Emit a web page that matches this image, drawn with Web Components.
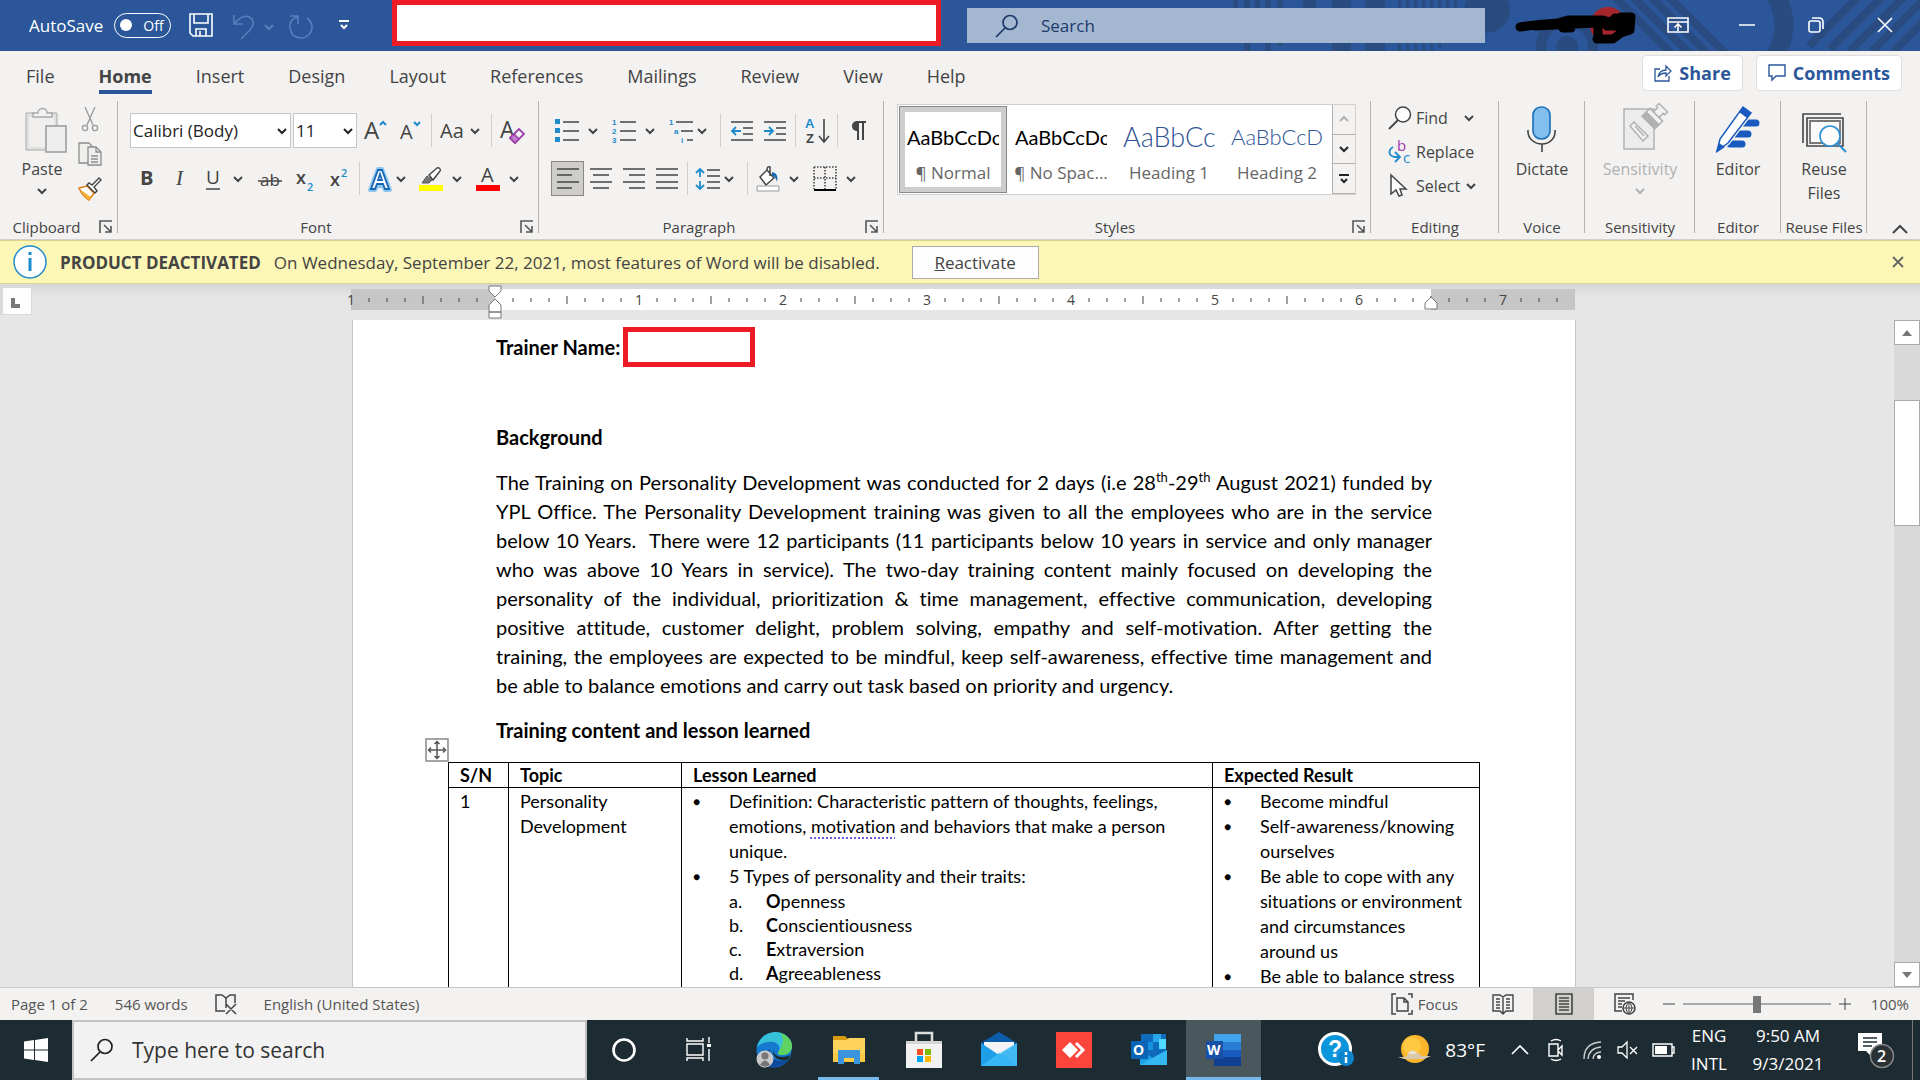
<!DOCTYPE html>
<html lang="en">
<head>
<meta charset="utf-8">
<title>Word</title>
<style>
  html, body { margin: 0; height: 100%; }
  body {
    overflow: hidden;
    font-family: "Open Sans", "Noto Sans", sans-serif;
    font-size: 16px;
    color: #444;
    --doc-font: Lato, "Liberation Sans", sans-serif;
  }
</style>
</head>
<body>
<word-window></word-window>

<script>
const CHEVRON = '<path d="M1 3l4 4 4-4" fill="none" stroke="currentColor" stroke-width="2"/>';

// name: [width, height, markup]
const ICONS = {
  chevron: [10, 10, CHEVRON],
  save: [24, 24, '<path d="M1 1h22v22H4l-3-3zM5 1v9h14V1M7 23v-7h10v7M11 18v5" fill="none" stroke="#fff" stroke-width="1.600"/>'],
  undo: [24, 26, '<path d="M2 1v9h9M2 10C8 3 13 1 17 3c6 3 5 9 1 13l-9 9" fill="none" stroke="#5480bd" stroke-width="1.600"/>'],
  redo: [26, 26, '<path d="M2 2h8v8M10 3C4 4 1 9 2 14c1 6 5 10 11 10s11-5 11-11c0-4-2-7-5-9" fill="none" stroke="#5480bd" stroke-width="1.600"/>'],
  more: [12, 12, '<path d="M1 2h10M3 6l3 3 3-3" fill="none" stroke="currentColor" stroke-width="2"/>'],
  search: [24, 24, '<circle cx="15" cy="8.500" r="7" fill="none" stroke="currentColor" stroke-width="1.700"/><path d="M10 14l-9 9" stroke="currentColor" stroke-width="1.700"/>'],
  ribbonmode: [22, 16, '<path d="M1 1h20v14H1zM1 5h20M11 14V8M7.500 10.500L11 7l3.500 3.500" fill="none" stroke="#fff" stroke-width="1.600"/>'],
  minimise: [16, 16, '<path d="M0 8h16" stroke="#fff" stroke-width="1.500"/>'],
  restore: [16, 16, '<path d="M1 6q0-2 2-2h7q2 0 2 2v7q0 2-2 2H3q-2 0-2-2zM4 1h7q4 0 4 4v7" fill="none" stroke="#fff" stroke-width="1.600"/>'],
  close: [16, 16, '<path d="M1 1l14 14M15 1L1 15" stroke="currentColor" stroke-width="1.600"/>'],
  dismiss: [12, 12, '<path d="M1 1l10 10M11 1L1 11" stroke="currentColor" stroke-width="1.800"/>'],
  share: [18, 18, '<path d="M6 5H1v12h14v-5M4 13c1-5 4-7 8-7V2l5 5-5 5V9c-4 0-6 1-8 4z" fill="none" stroke="#2b579a" stroke-width="1.300"/>'],
  comment: [18, 18, '<path d="M1 1h16v11H8l-4 4v-4H1z" fill="none" stroke="#2b579a" stroke-width="1.400"/>'],
  paste: [50, 48, '<g transform="translate(8 0)"><path d="M1 8h9v4h14V8h8v37H1z" fill="#e3e1df" stroke="#aaa"/><path d="M4 12h25v30H4z" fill="#f0efee"/><path d="M8 12V8h5c0-6 9-6 9 0h5v4z" fill="#f3f2f1" stroke="#aaa" stroke-width="1.500"/><path d="M21 21h20v26H21z" fill="#eee" stroke="#999" stroke-width="1.500"/></g>'],
  cut: [24, 24, '<g fill="none" stroke="#999" stroke-width="1.300"><path d="M7 0l8 18M17 0L9 18"/><circle cx="7" cy="21" r="2.600"/><circle cx="17" cy="21" r="2.600"/></g>'],
  copy: [24, 24, '<g fill="#f0efee" stroke="#8d8d8d" stroke-width="1.300"><path d="M1 1h10l3 3v17H1z"/><path d="M10 5h8l5 5v13H10z"/><path d="M18 5v5h5M13 14h7M13 17h7M13 20h7" fill="none"/></g>'],
  painter: [24, 24, '<path d="M1 11l8-2 7 7-5 7C6 20 3 16 1 11z" fill="#fff" stroke="#e07b12" stroke-width="1.500"/><path d="M3 13l10 7-2 3C7 21 5 17 3 13z" fill="#f3b13c"/><path d="M9 8l8 8 2-2-3-4 7-7-2-2-7 7-3-2z" fill="#fff" stroke="#444" stroke-width="1.400"/>'],
  grow: [24, 24, '<text x="0" y="20" font-size="24" fill="#444">A</text><path d="M16 6l3-3 3 3" fill="none" stroke="#1e8bcd" stroke-width="2"/>'],
  shrink: [24, 24, '<text x="1" y="20" font-size="20" fill="#444">A</text><path d="M15 3l3 3 3-3" fill="none" stroke="#1e8bcd" stroke-width="2"/>'],
  case: [26, 24, '<text x="0" y="19" font-size="20" fill="#444">Aa</text>'],
  clear: [26, 26, '<text x="0" y="20" font-size="23" fill="#444">A</text><path d="M10 20l9-9 5 5-9 9z" fill="#f3f2f1" stroke="#9b3fa8" stroke-width="1.800"/><path d="M10 20l4-4 5 5-4 4z" fill="#c27bd0" stroke="#9b3fa8" stroke-width="1.500"/>'],
  bold: [24, 24, '<text x="5" y="18" font-size="20" font-weight="700" fill="#444">B</text>'],
  italic: [24, 24, '<text x="8" y="18" font-size="21" font-style="italic" font-family="Liberation Serif, serif" fill="#444">I</text>'],
  underline: [24, 24, '<text x="6" y="17" font-size="19" fill="#444">U</text><path d="M6 22h14" stroke="#444" stroke-width="1.500"/>'],
  strike: [24, 24, '<text x="2" y="19" font-size="17" fill="#444">ab</text><path d="M0 14h24" stroke="#444" stroke-width="1.500"/>'],
  sub: [24, 26, '<text x="4" y="18" font-size="18" font-weight="600" fill="#444">x</text><text x="15" y="25" font-size="11" font-weight="600" fill="#1e8bcd">2</text>'],
  sup: [24, 26, '<text x="3" y="20" font-size="18" font-weight="600" fill="#444">x</text><text x="14" y="11" font-size="11" font-weight="600" fill="#1e8bcd">2</text>'],
  effects: [24, 26, '<path d="M2 24L10 3h4l8 21h-5l-2-4H9l-2 4z" fill="#fff" stroke="#8fc6ee" stroke-width="4" stroke-linejoin="round"/><path d="M3 23L10 4h4l7 19h-4l-2-5H9l-2 5zM10 14h4l-2-6z" fill="#fff" stroke="#1667b7" stroke-width="1.800"/>'],
  highlight: [24, 26, '<path d="M0 19h24v6H0z" fill="#ff0"/><path d="M10 9l8-7q2-1 3 1 1 1 0 2l-7 9z" fill="#fff" stroke="#444" stroke-width="1.400"/><path d="M8 10l5 4-3 3H3z" fill="#777" stroke="#555"/>'],
  color: [24, 26, '<text x="5" y="16" font-size="20" fill="#444">A</text><path d="M0 19h24v6H0z" fill="#f00"/>'],
  bullets: [24, 26, '<path d="M8 4h16M8 13h16M8 22h16" stroke="#444" stroke-width="1.600"/><path d="M0 1h5v5H0zM0 10h5v5H0zM0 19h5v5H0z" fill="#1e8bcd"/>'],
  numbers: [24, 26, '<path d="M8 4h16M8 13h16M8 22h16" stroke="#444" stroke-width="1.600"/><g font-size="8" font-weight="700" font-family="Liberation Sans, sans-serif" fill="#1e8bcd"><text x="0" y="7">1</text><text x="0" y="16">2</text><text x="0" y="25">3</text></g>'],
  multi: [24, 26, '<path d="M7 4h17M12 13h12M18 22h6" stroke="#444" stroke-width="1.600"/><g font-size="8" font-weight="700" font-family="Liberation Sans, sans-serif" fill="#1e8bcd"><text x="0" y="7">1</text><text x="5" y="16">a</text><text x="12" y="25">i</text></g>'],
  outdent: [24, 24, '<path d="M1 3h22M13 9h10M13 15h10M1 21h22" stroke="#444" stroke-width="1.600"/><path d="M11 12H2M6 8l-4 4 4 4" fill="none" stroke="#1e8bcd" stroke-width="1.800"/>'],
  indent: [24, 24, '<path d="M1 3h22M13 9h10M13 15h10M1 21h22" stroke="#444" stroke-width="1.600"/><path d="M1 12h9M6 8l4 4-4 4" fill="none" stroke="#1e8bcd" stroke-width="1.800"/>'],
  sort: [24, 26, '<g font-size="13" font-weight="700" font-family="Liberation Sans, sans-serif"><text x="0" y="10" fill="#1e8bcd">A</text><text x="1" y="25" fill="#444">Z</text></g><path d="M19 1v22M14 18l5 6 5-6" fill="none" stroke="#444" stroke-width="1.600"/>'],
  pilcrow: [16, 22, '<path d="M15 2H6" stroke="#444" stroke-width="2"/><path d="M7 1C3 1 1 3 1 6s2 5 6 5z" fill="#444"/><path d="M7 1v19M12 1v19" stroke="#444" stroke-width="2"/>'],
  left: [22, 24, '<path d="M0 2h22M0 8h15M0 15h22M0 21h15" stroke="#444" stroke-width="1.700"/>'],
  center: [22, 24, '<path d="M0 2h22M3 8h16M0 15h22M3 21h16" stroke="#444" stroke-width="1.700"/>'],
  right: [22, 24, '<path d="M0 2h22M6 8h16M0 15h22M6 21h16" stroke="#444" stroke-width="1.700"/>'],
  justify: [22, 24, '<path d="M0 2h22M0 8h22M0 15h22M0 21h22" stroke="#444" stroke-width="1.700"/>'],
  spacing: [24, 24, '<path d="M11 3h13M11 9h13M11 15h13M11 21h13" stroke="#444" stroke-width="1.600"/><path d="M4 2v8M0 6l4-4 4 4M4 14v8M0 18l4 4 4-4" fill="none" stroke="#1e8bcd" stroke-width="1.800"/>'],
  shading: [24, 26, '<path d="M4 11l7-7 7 8-8 7zM11 4q0-4 3-3v9" fill="#fff" stroke="#444" stroke-width="1.500"/><path d="M16 6q7 1 5 10-1-5-5-7z" fill="#1667b7"/><path d="M1 20h22v5H1z" fill="#fff" stroke="#999"/>'],
  borders: [24, 26, '<path d="M1 1h22v22M1 1v22M12 1v22M1 12h22" fill="none" stroke="#444" stroke-width="1.600" stroke-dasharray="1.500 1.500"/><path d="M1 24h22" stroke="#000" stroke-width="2"/>'],
  launcher: [14, 14, '<path d="M1 13V1h12M5 5l7 7M12 6v6H6" fill="none" stroke="#555" stroke-width="1.600"/>'],
  find: [24, 24, '<circle cx="15" cy="8.500" r="7.500" fill="#fff" stroke="#444" stroke-width="1.500"/><path d="M10 14l-9 9" stroke="#444" stroke-width="1.800"/>'],
  replace: [24, 26, '<text x="9" y="12" font-size="15" fill="#a33bae">b</text><text x="15" y="24" font-size="15" fill="#1e8bcd">c</text><path d="M5 8c-5 3-5 9 2 10h4M7 13l5 5-5 5" fill="none" stroke="#1e8bcd" stroke-width="1.800"/>'],
  select: [24, 26, '<path d="M3 2v19l5-4 3 6 3-1-2-6h6z" fill="#fff" stroke="#444" stroke-width="1.500"/>'],
  dictate: [32, 48, '<rect x="7" y="2" width="17" height="32" rx="8" fill="#83beec" stroke="#1a6fb9" stroke-width="1.600"/><path d="M2 25v2c0 6 6 12 14 12s13-6 13-12v-2M16 39v8" fill="none" stroke="#444" stroke-width="1.600"/>'],
  sensitivity: [44, 48, '<g stroke="#b1b1b1" stroke-width="1.500"><path d="M6 4h30v40H6z" fill="#ececec"/><g transform="translate(34 14) rotate(45)"><path d="M-9-6H9V-1H-9zM-4-6v-6h-2v-4H6v4H4v6z" fill="#f3f2f1"/><path d="M-9 0H9V5H-9z" fill="#b1b1b1"/></g><path d="M12 21l4-4 14 14-5 5zM17 21l9 10" fill="#f3f2f1"/></g>'],
  editor: [48, 48, '<g stroke="#185abd" stroke-width="7" stroke-linecap="round"><path d="M24 18h18M20 29h14M16 39h12"/></g><path d="M29 2l8 6-23 30-10 9-2-2 3-11z" fill="#fff" stroke="#f3f2f1" stroke-width="4"/><path d="M29 2l8 6-23 30-11 8 3-12z" fill="#fff" stroke="#185abd" stroke-width="1.500"/><path d="M29 2l8 6-4 5-8-6zM5 38l6 4-9 6z" fill="#185abd"/>'],
  reuse: [48, 48, '<g fill="none"><path d="M3 38V9h38M7 41V13h36v28z" stroke="#444" stroke-width="1.600"/><path d="M10 16h30v22H10z" fill="#fafafa" stroke="#777" stroke-width="1.800"/><circle cx="30" cy="31" r="10" fill="#fff" stroke="#2b8fd4" stroke-width="1.600"/><path d="M37 38l9 9" stroke="#2b8fd4" stroke-width="2"/></g>'],
  info: [34, 34, '<circle cx="17" cy="17" r="16" fill="#fff" stroke="#1e8bcd" stroke-width="1.500"/><path d="M17 13v13M17 7v3" stroke="#1e8bcd" stroke-width="3"/>'],
  collapse: [16, 10, '<path d="M1 9l7-7 7 7" fill="none" stroke="#444" stroke-width="2"/>'],
  tri: [10, 6, '<path d="M0 6l5-6 5 6z" fill="#777"/>'],
  tab: [28, 26, '<path d="M8 10h4v6h5v4H8z" fill="#777"/>'],
  move: [24, 24, '<path d="M1 1h22v22H1z" fill="#fff" stroke="#888" stroke-width="1.500"/><path d="M12 4v16M4 12h16M9.500 6L12 3.500 14.500 6M9.500 18l2.500 2.500 2.500-2.500M6 9.500L3.500 12 6 14.500M18 9.500l2.500 2.500-2.500 2.500" fill="none" stroke="#555" stroke-width="1.500"/>'],
  proof: [22, 22, '<path d="M10 18H1V2h6l4 3 4-3h5v8M11 5v10M11 11l10 10M21 11L11 21" fill="none" stroke="#444" stroke-width="1.500"/>'],
  focus: [22, 22, '<path d="M5 1H1v20h4M17 1h4v4M21 17v4h-4" fill="none" stroke="#444" stroke-width="1.500"/><path d="M6 5h7l4 4v9H6zM13 5v4h4" fill="none" stroke="#444" stroke-width="1.500"/>'],
  read: [22, 22, '<path d="M1 2h7l3 2 3-2h7v16h-7l-3 3-3-3H1zM11 4v16M4 6h4M4 9h4M4 12h4M4 15h4M14 6h4M14 9h4M14 12h4M14 15h4" fill="none" stroke="#444" stroke-width="1.400"/>'],
  print: [18, 22, '<path d="M1 1h16v20H1zM4 5h10M4 8h10M4 11h10M4 14h10M4 17h10" fill="none" stroke="#444" stroke-width="1.600"/>'],
  web: [22, 22, '<path d="M8 18H1V1h18v6M4 5h12M4 8h7M4 11h4M4 14h4" fill="none" stroke="#444" stroke-width="1.500"/><circle cx="15" cy="15" r="6" fill="#f3f2f1" stroke="#444" stroke-width="1.500"/><path d="M9 15h12M15 9v12M15 9q-6 6 0 12q6-6 0-12" fill="none" stroke="#444"/>'],
  minus: [12, 12, '<path d="M0 6h12" stroke="#444"/>'],
  plus: [12, 12, '<path d="M0 6h12M6 0v12" stroke="#444"/>'],
  windows: [24, 24, '<path d="M0 3.500L10 2v9.500H0zM11 2l13-2v11.500H11zM0 12.500h10V22L0 20.500zM11 12.500h13V24l-13-2z" fill="#fff"/>'],
  cortana: [26, 26, '<circle cx="13" cy="13" r="10.500" fill="none" stroke="#fff" stroke-width="2.600"/>'],
  taskview: [26, 26, '<path d="M1 1v3h16V1M1 7h16v11H1zM1 24v-3h16v3M23 0v6M23 12v12" fill="none" stroke="#fff" stroke-width="1.400"/><path d="M21 7h4v3h-4z" fill="#fff"/>'],
  edge: [36, 36, '<circle cx="18" cy="18" r="17.500" fill="#1579cf"/><path d="M1 15C4 3 14 0 20 0c9 0 16 7 16 14 0 7-6 9-10 9-4 0-5-2-3-4 2-6-4-10-9-9C8 10 4 12 1 15z" fill="#35c1d6"/><path d="M24 1c8 2 12 8 12 13 0 7-6 9-10 9-4 0-5-2-3-4 4-6 6-12 1-18z" fill="#5fd35f"/><path d="M14 17c-1 10 8 14 18 11-6 8-16 9-21 5-5-5-3-12 3-16z" fill="#0c4a9b"/><path d="M18 16c-2 3 0 8 7 9 4 0 7-1 9-2l-2 5c-10 2-18-4-14-12z" fill="#1d2c33"/><circle cx="9" cy="27" r="8.500" fill="#c9c9c9"/><circle cx="9" cy="24" r="3.500" fill="#777"/><path d="M4 33q5-9 10 0-5 3-10 0z" fill="#777"/>'],
  explorer: [34, 30, '<path d="M1 1h12l3 3v4H1z" fill="#d99a10"/><path d="M1 5h13l3-2h16v24H1z" fill="#ffd35c"/><path d="M1 18h32v9H1z" fill="#fbc944"/><path d="M6 29V15h22v14h-6v-6H12v6z" fill="#3a94de"/>'],
  store: [36, 36, '<path d="M10 10V1h16v9" fill="none" stroke="#ddd" stroke-width="2.500"/><path d="M0 9h36v27H0z" fill="#f2f2f2"/><path d="M0 9h36v3H0z" fill="#d5d5d5"/><path d="M11 17h6v6h-6z" fill="#f25022"/><path d="M19 17h6v6h-6z" fill="#7fba00"/><path d="M11 24h6v6h-6z" fill="#00a4ef"/><path d="M19 24h6v6h-6z" fill="#ffb900"/>'],
  mail: [36, 36, '<path d="M0 11L18 0l18 11v5H0z" fill="#0b5cab"/><path d="M3 10h30v12H3z" fill="#f4f4f4"/><path d="M0 11l18 12L36 11v23H0z" fill="#1e9de8"/><path d="M0 34l18-13 18 13z" fill="#36b7f5"/><path d="M36 11v23L18 21z" fill="#58cbf8" opacity=".6"/>'],
  anydesk: [36, 36, '<path d="M0 0h36v36H0z" fill="#fb443b"/><path d="M6 18l8-8 8 8-8 8z" fill="#fff"/><path d="M20 11l7 7-7 7" fill="none" stroke="#fff" stroke-width="3"/>'],
  outlook: [36, 34, '<path d="M10 1h25v31H10z" fill="#0f6cbd"/><path d="M10 9h12v8H10z" fill="#1490df"/><path d="M22 1h8v8h-8z" fill="#28a8ea"/><path d="M28 6h7v10h-7z" fill="#50d9ff"/><path d="M9 17l13 8 14-8v15H9z" fill="#1aa0e8"/><path d="M9 32l27-15v15z" fill="#35b8f1"/><path d="M0 8h17v18H0z" fill="#0a64b5"/><text x="2" y="22" font-size="14" font-weight="700" fill="#fff">O</text>'],
  word: [36, 34, '<path d="M8 1h27v8H8z" fill="#41a5ee"/><path d="M8 9h27v8H8z" fill="#2b7cd3"/><path d="M8 17h27v7H8z" fill="#185abd"/><path d="M8 24h27v9H8z" fill="#103f91"/><path d="M0 8h17v18H0z" fill="#1850a8"/><text x="1" y="22" font-size="14" font-weight="700" fill="#fff">W</text>'],
  help: [36, 36, '<circle cx="17" cy="17" r="15.500" fill="#0b96dc" stroke="#fff" stroke-width="3"/><text x="10" y="25" font-size="23" font-weight="700" font-family="Liberation Sans, sans-serif" fill="#fff">?</text><circle cx="28" cy="26" r="8" fill="#0b84cc"/><path d="M28 25v6M28 20v3" stroke="#fff" stroke-width="2.500"/>'],
  weather: [36, 32, '<circle cx="18" cy="15" r="14" fill="#fcb62b"/><circle cx="15" cy="12" r="9" fill="#ffd04f" opacity=".7"/><path d="M1 23h8c2-4 5-4 7-2 3-4 7-2 8 1h10l-7 3H7z" fill="#d9c9ae"/><path d="M11 20c2-5 8-4 9 0z" fill="#e8e2d6"/>'],
  up: [18, 12, '<path d="M1 10l8-8 8 8" fill="none" stroke="#fff" stroke-width="1.600"/>'],
  meet: [18, 24, '<path d="M2 6h9v12H2zM11 12l4-4v9l-4-4M4 3q5-3 10 0M4 21q5 3 10 0" fill="none" stroke="#fff" stroke-width="1.400"/>'],
  wifi: [20, 20, '<path d="M2 19Q2 3 19 2M6 19Q7 8 19 7M11 19q1-7 8-7" fill="none" stroke="#ccc" stroke-width="1.400"/><circle cx="17" cy="17" r="2" fill="#fff"/>'],
  mute: [22, 18, '<path d="M1 6h4l5-5v16l-5-5H1zM13 6l7 7M20 6l-7 7" fill="none" stroke="#fff" stroke-width="1.300"/>'],
  battery: [24, 14, '<path d="M1 1h19v12H1zM20 4h2v6h-2" fill="none" stroke="#fff" stroke-width="1.400"/><path d="M3 3h12v8H3z" fill="#fff"/>'],
  notify: [38, 38, '<path d="M1 2h24v18H14v5l-5-5H1z" fill="#fff"/><path d="M6 7h14M6 11h14M6 15h9" stroke="#1d2c33" stroke-width="1.400"/><circle cx="25" cy="25" r="11.500" fill="#2b3236" stroke="#888" stroke-width="1.500"/><text x="20" y="31" font-size="16" font-weight="600" fill="#fff">2</text>']
};

const icon = (name) => {
  const [w, h, body] = ICONS[name];
  return `<svg width="${w}" height="${h}" viewBox="0 0 ${w} ${h}" aria-hidden="true">${body}</svg>`;
};

const RESET = `
  * { box-sizing: border-box; }
  svg { display: block; flex: none; overflow: visible; }
  button { border: 0; padding: 0; margin: 0; background: none; font: inherit; color: inherit; }
`;

// Registers an element whose shadow root is built from render(host).
const define = (name, css, render) => {
  customElements.define(name, class extends HTMLElement {
    connectedCallback() {
      if (this.shadowRoot) return;
      this.attachShadow({ mode: 'open' });
      this.shadowRoot.innerHTML = `<style>${RESET}${css}</style>${render(this)}`;
    }
  });
};

define('word-window', `
  :host { display: flex; flex-direction: column; height: 100vh; }
  doc-workspace { flex: 1; min-height: 0; }
`, () => `
  <title-bar></title-bar>
  <ribbon-tabs></ribbon-tabs>
  <ribbon-panel></ribbon-panel>
  <message-bar></message-bar>
  <doc-workspace></doc-workspace>
  <status-bar></status-bar>
  <task-bar></task-bar>
`);

define('title-bar', `
  :host { display: flex; align-items: flex-start; height: 51px; flex: none; background: #2b579a; color: #fff; font-size: 17px; position: relative; overflow: hidden; }
  .pattern { position: absolute; right: 0; top: 0; }
  .quick { display: flex; align-items: center; width: 392px; height: 50px; padding-left: 29px; flex: none; }
  .switch { display: flex; align-items: center; gap: 11px; width: 57px; height: 25px; margin: 0 18px 0 11px; padding: 0 5px; border: 1px solid #fff; border-radius: 13px; font-size: 14px; }
  .switch i { width: 12px; height: 12px; border-radius: 50%; background: #fff; }
  .undo { display: flex; align-items: center; gap: 8px; margin: 4px 14px 0 19px; color: #5480bd; }
  .redo { margin: 4px 24px 0 0; }
  .doc { width: 549px; height: 46px; background: #fff; border: 5px solid #ed1c24; flex: 0 1 auto; }
  .search { display: flex; align-items: center; gap: 22px; flex: 0 1 518px; min-width: 120px; height: 35px; margin: 8px 0 0 26px; padding-left: 28px; background: #a4b7d1; color: #1c3a6b; position: relative; }
  .search input { flex: 1; min-width: 0; border: 0; padding: 0; background: none; font: inherit; color: inherit; }
  .search input::placeholder { color: #1c3a6b; opacity: 1; }
  .user { margin-left: 30px; position: relative; }
  .controls { display: flex; margin-left: auto; padding-right: 1px; position: relative; }
  .controls button { width: 69px; height: 50px; display: grid; place-items: center; }
`, () => `
  <svg class="pattern" width="700" height="51" viewBox="1220 0 700 51" aria-hidden="true">
    <g fill="#2a4b80">
      <path d="M1233 0h5v8h-5zM1244 0h6v51h-6zM1255 0h5v8h-5zM1265 0h6v51h-6zM1277 0h6v46h-6zM1303 0h13v8h-13zM1332 0h19v51h-19zM1365 0h20v51h-20z"/>
      <path d="M1398 0h3v51h-3zM1406 0h3v51h-3zM1414 0h3v51h-3zM1422 0h3v51h-3zM1430 0h3v51h-3zM1438 0h3v48h-3zM1446 0h3v8h-3zM1454 0h3v8h-3z"/>
      <circle cx="1487" cy="10" r="23"/><circle cx="1567" cy="47" r="11"/>
    </g>
    <g fill="none" stroke="#2a4b80">
      <circle cx="1567" cy="47" r="26" stroke-width="10"/>
      <path d="M1775-6q18 32 0 62" stroke-width="19"/>
      <path d="M1612-6l60 60M1630-6l60 60M1648-6l60 60M1666-6l60 60" stroke-width="8"/>
      <path d="M1809 46l54-54M1830 49l58-58M1850 51l62-62M1872 51l62-62M1894 51l40-40" stroke-width="8"/>
    </g>
  </svg>
  <div class="quick">
    <span id="as">AutoSave</span>
    <button class="switch" role="switch" aria-checked="false" aria-labelledby="as"><i></i>Off</button>
    <button aria-label="Save">${icon('save')}</button>
    <button class="undo" aria-label="Undo">${icon('undo')}${icon('chevron')}</button>
    <button class="redo" aria-label="Redo">${icon('redo')}</button>
    <button aria-label="Customize">${icon('more')}</button>
  </div>
  <div class="doc"></div>
  <label class="search">${icon('search')}<input type="search" placeholder="Search" aria-label="Search"></label>
  <svg class="user" width="124" height="50" viewBox="0 0 124 50" aria-hidden="true">
    <circle cx="93" cy="25" r="18" fill="#a4262c"/>
    <path d="M5 27q20-3 38-4l10-3h35l6 2 12-5h9M20 26l60-3M48 28h8M83 22v15M82 39h16l8-6 9-3 1-13M100 18l14 4M92 26h18" fill="none" stroke="#000" stroke-width="9" stroke-linecap="round" stroke-linejoin="round"/>
  </svg>
  <div class="controls">
    <button aria-label="Ribbon display options">${icon('ribbonmode')}</button>
    <button aria-label="Minimise">${icon('minimise')}</button>
    <button aria-label="Restore">${icon('restore')}</button>
    <button aria-label="Close">${icon('close')}</button>
  </div>
`);

define('ribbon-tabs', `
  :host { display: flex; align-items: center; height: 50px; flex: none; padding: 0 18px 0 26px; background: #f3f2f1; font-size: 18px; }
  nav { display: flex; gap: 44px; flex: 1; }
  a { color: inherit; text-decoration: none; line-height: 28px; padding: 4px 0; }
  a[aria-current] { font-weight: 700; box-shadow: inset 0 -4px #2b579a; }
  .action { display: flex; align-items: center; gap: 7px; height: 36px; padding: 0 11px; margin: -6px 0 0 13px; background: #fff; border: 1px solid #e1dfdd; border-radius: 4px; color: #2b579a; font-weight: 700; }
`, () => `
  <nav>
    ${['File', 'Home', 'Insert', 'Design', 'Layout', 'References', 'Mailings', 'Review', 'View', 'Help']
      .map(t => `<a href="#"${t === 'Home' ? ' aria-current="page"' : ''}>${t}</a>`).join('')}
  </nav>
  <button class="action">${icon('share')}Share</button>
  <button class="action">${icon('comment')}Comments</button>
`);

define('ribbon-group', `
  :host { display: flex; flex-direction: column; flex: none; height: 136px; background: linear-gradient(#b3b0ad, #b3b0ad) right top / 1px 132px no-repeat; }
  .body { flex: 1; min-height: 0; }
  footer { display: flex; align-items: center; height: 20px; font-size: 15px; white-space: nowrap; }
  footer span { flex: 1; text-align: center; }
  :host([launcher]) span { padding-right: 6px; }
  button { margin-right: 5px; }
`, (host) => `
  <div class="body"><slot></slot></div>
  <footer><span>${host.getAttribute('label')}</span>${host.hasAttribute('launcher') ? `<button aria-label="More ${host.getAttribute('label')} options">${icon('launcher')}</button>` : ''}</footer>
`);

// One ribbon command; "arrow" adds the drop-down chevron (wide or tight).
define('tool-button', `
  :host { display: block; height: 35px; width: 33px; flex: none; }
  :host([wide]) { width: 36px; }
  :host([arrow]) { width: 57px; }
  :host([arrow=tight]) { width: 51px; }
  button { display: flex; align-items: center; justify-content: center; width: 100%; height: 100%; }
  :host([arrow]) button { justify-content: flex-start; padding-left: 4px; gap: 9px; }
  :host([arrow=tight]) button { gap: 4px; }
  :host([pressed]) button { background: #cfcdcb; border: 1px solid #8a8886; }
`, (host) => `
  <button aria-label="${host.getAttribute('icon')}">${icon(host.getAttribute('icon'))}${host.hasAttribute('arrow') ? icon('chevron') : ''}</button>
`);

define('big-button', `
  :host { display: block; }
  button { display: flex; flex-direction: column; align-items: center; width: 100%; line-height: 24px; }
  span { margin-top: 4px; }
  .arrow { margin-top: 5px; }
  :host([disabled]) { color: #b1b1b1; }
`, (host) => `
  <button>${icon(host.getAttribute('icon'))}<span><slot></slot></span>${host.hasAttribute('arrow') ? `<i class="arrow">${icon('chevron')}</i>` : ''}</button>
`);

define('combo-box', `
  :host { display: grid; align-items: center; height: 35px; background: #fff; border: 1px solid #c8c6c4; color: #222; }
  select { grid-area: 1 / 1; appearance: none; width: 100%; height: 33px; border: 0; padding: 0 20px 0 2px; background: none; font: inherit; font-size: 17px; color: inherit; }
  svg { grid-area: 1 / 1; justify-self: end; margin-right: 3px; pointer-events: none; }
`, (host) => `
  <select aria-label="${host.getAttribute('name')}"><option>${host.getAttribute('value')}</option></select>${icon('chevron')}
`);

define('style-gallery', `
  :host { display: flex; height: 91px; background: #fff; border: 1px solid #d2d0ce; }
  .items { display: flex; flex: 1; min-width: 0; overflow: hidden; padding-left: 1px; }
  .item { flex: 0 0 108px; display: flex; flex-direction: column; align-items: center; padding: 11px 0 0; border: 6px solid transparent; }
  .item[aria-pressed=true] { border-color: #cfcdcb; outline: 1px solid #8a8886; outline-offset: -1px; margin: 1px 0; padding-top: 10px; }
  b { display: block; width: 92px; overflow: hidden; white-space: nowrap; font: 400 20px/30px var(--doc-font); color: #000; text-align: left; }
  .h1 b { font-size: 27px; font-weight: 300; color: #2f5496; }
  .h2 b { font-size: 22px; font-weight: 300; color: #2f5496; }
  .item span { margin-top: 9px; font-size: 17px; line-height: 24px; color: #666; white-space: nowrap; }
  .rail { display: flex; flex-direction: column; width: 23px; border-left: 1px solid #b3b0ad; }
  .rail button { flex: 1; display: grid; place-items: center; background: #f3f2f1; color: #222; border-bottom: 1px solid #b3b0ad; }
  .rail button:first-child svg { transform: rotate(180deg); }
  .rail button:first-child { color: #b1b1b1; }
`, () => `
  <div class="items">
    <button class="item" aria-pressed="true"><b>AaBbCcDc</b><span>¶ Normal</span></button>
    <button class="item"><b>AaBbCcDc</b><span>¶ No Spac...</span></button>
    <button class="item h1"><b>AaBbCc</b><span>Heading 1</span></button>
    <button class="item h2"><b>AaBbCcD</b><span>Heading 2</span></button>
  </div>
  <div class="rail">
    <button aria-label="Previous">${icon('chevron')}</button>
    <button aria-label="Next">${icon('chevron')}</button>
    <button aria-label="All styles">${icon('more')}</button>
  </div>
`);

define('ribbon-panel', `
  :host { display: flex; height: 139px; flex: none; background: #f3f2f1; border-bottom: 1px solid #d2d0ce; }
  .clip { width: 118px; } .font { width: 421px; } .para { width: 345px; } .styles { flex: 1; min-width: 200px; }
  .edit { width: 128px; } .w86 { width: 86px; } .sens { width: 110px; }
  .row { display: flex; align-items: center; height: 35px; margin: 12px 0 13px 12px; }
  .row + .row { margin-top: 0; }
  hr { width: 1px; height: 33px; margin: 0 4px; border: 0; background: #d2d0ce; flex: none; }
  .clips { display: flex; padding-left: 16px; }
  .clips > div { display: flex; flex-direction: column; padding-left: 5px; }
  .face { width: 161px; margin-right: 2px; } .size { width: 64px; margin-right: 1px; }
  .tool { display: flex; align-items: center; gap: 4px; height: 34px; padding-left: 17px; }
  .tool svg:last-child:not(:first-child) { margin-left: 2px; }
  .find svg:last-child:not(:first-child) { margin-left: 12px; }
  big-button { padding-top: 4px; }
  .clips big-button { width: 52px; }
  style-gallery { margin: 3px 15px 0 13px; }
  .end { flex: 1; max-width: 53px; display: flex; align-items: flex-end; justify-content: flex-end; padding: 0 12px 5px; }
`, () => `
  <ribbon-group class="clip" label="Clipboard" launcher>
    <div class="clips">
      <big-button icon="paste" arrow>Paste</big-button>
      <div><tool-button icon="cut"></tool-button><tool-button icon="copy"></tool-button><tool-button icon="painter"></tool-button></div>
    </div>
  </ribbon-group>
  <ribbon-group class="font" label="Font" launcher>
    <div class="row">
      <combo-box class="face" name="Font" value="Calibri (Body)"></combo-box>
      <combo-box class="size" name="Font size" value="11"></combo-box>
      <tool-button icon="grow" wide></tool-button><tool-button icon="shrink"></tool-button><hr>
      <tool-button icon="case" arrow="tight"></tool-button><hr><tool-button icon="clear"></tool-button>
    </div>
    <div class="row">
      <tool-button icon="bold"></tool-button><tool-button icon="italic"></tool-button>
      <tool-button icon="underline" arrow></tool-button><tool-button icon="strike"></tool-button>
      <tool-button icon="sub" wide></tool-button><tool-button icon="sup"></tool-button><hr>
      <tool-button icon="effects" arrow="tight"></tool-button><tool-button icon="highlight" arrow></tool-button>
      <tool-button icon="color" arrow></tool-button>
    </div>
  </ribbon-group>
  <ribbon-group class="para" label="Paragraph" launcher>
    <div class="row">
      <tool-button icon="bullets" arrow></tool-button><tool-button icon="numbers" arrow></tool-button>
      <tool-button icon="multi" arrow="tight"></tool-button><hr>
      <tool-button icon="outdent"></tool-button><tool-button icon="indent"></tool-button><hr>
      <tool-button icon="sort"></tool-button><hr><tool-button icon="pilcrow"></tool-button>
    </div>
    <div class="row">
      <tool-button icon="left" pressed></tool-button><tool-button icon="center"></tool-button>
      <tool-button icon="right"></tool-button><tool-button icon="justify"></tool-button><hr>
      <tool-button icon="spacing" arrow="tight"></tool-button><hr>
      <tool-button icon="shading" arrow></tool-button><tool-button icon="borders" arrow></tool-button>
    </div>
  </ribbon-group>
  <ribbon-group class="styles" label="Styles" launcher><style-gallery></style-gallery></ribbon-group>
  <ribbon-group class="edit" label="Editing">
    <button class="tool find">${icon('find')}Find${icon('chevron')}</button>
    <button class="tool">${icon('replace')}Replace</button>
    <button class="tool">${icon('select')}Select${icon('chevron')}</button>
  </ribbon-group>
  <ribbon-group class="w86" label="Voice"><big-button icon="dictate">Dictate</big-button></ribbon-group>
  <ribbon-group class="sens" label="Sensitivity"><big-button icon="sensitivity" arrow disabled>Sensitivity</big-button></ribbon-group>
  <ribbon-group class="w86" label="Editor"><big-button icon="editor">Editor</big-button></ribbon-group>
  <ribbon-group class="w86" label="Reuse Files"><big-button icon="reuse">Reuse<br>Files</big-button></ribbon-group>
  <div class="end"><button aria-label="Collapse the ribbon">${icon('collapse')}</button></div>
`);

define('message-bar', `
  :host { display: flex; align-items: center; height: 44px; flex: none; padding: 0 16px 0 13px; background: #fcf7b6; border: solid #d8d48c; border-width: 1px 0; font-size: 17px; }
  strong { margin: 0 13px; font-weight: 700; }
  .go { width: 127px; height: 33px; margin-left: 32px; background: #fdfdfd; border: 1px solid #ababab; }
  .x { margin-left: auto; color: #666; }
`, () => `
  ${icon('info')}<strong>PRODUCT DEACTIVATED</strong>
  <span>On Wednesday, September 22, 2021, most features of Word will be disabled.</span>
  <button class="go"><u>R</u>eactivate</button>
  <button class="x" aria-label="Close message">${icon('dismiss')}</button>
`);

define('doc-ruler', `
  :host { display: block; width: 1224px; height: 36px; }
`, () => {
  // zero sits one inch (144px) in; a tick every eighth of an inch
  let marks = '';
  for (let i = -8; i < 60; i++) {
    const x = 144 + i * 18;
    if (i === 0) continue;
    if (i % 8 === 0) marks += `<text x="${x}" y="21" text-anchor="middle" font-size="14" fill="#444">${Math.abs(i / 8)}</text>`;
    else marks += i % 4 === 0 ? `<path d="M${x} 12v8" stroke="#444"/>` : `<path d="M${x} 14v4" stroke="#444"/>`;
  }
  return `<svg width="1224" height="36" viewBox="0 0 1224 36" role="img" aria-label="Ruler">
    <path d="M0 5h1224v21H0z" fill="#c6c6c6"/><path d="M144 5h936v21H144z" fill="#fff"/>${marks}
    <g fill="#fff" stroke="#777"><path d="M138 2h12v5l-6 6-6-6zM138 28v-7l6-6 6 6v7zM138 28h12v6h-12zM1074 25v-6l6-6 6 6v6z"/></g>
  </svg>`;
});

define('scroll-rail', `
  :host { display: flex; flex-direction: column; background: #d9d9d9; }
  button, i { display: grid; place-items: center; height: 25px; background: #fff; border: 1px solid #ababab; }
  .thumb { height: 126px; margin-top: 55px; }
  .down { margin-top: auto; }
  .down svg { transform: rotate(180deg); }
`, () => `
  <button aria-label="Scroll up">${icon('tri')}</button><i class="thumb"></i><button class="down" aria-label="Scroll down">${icon('tri')}</button>
`);

define('doc-workspace', `
  :host { display: grid; grid-template: 36px 1fr / 32px 1fr 26px; background: #e6e6e6; overflow: hidden; }
  .tab { width: 32px; height: 31px; padding: 3px 0 0 3px; background: #dadada; }
  .tab svg { background: #fdfdfd; }
  .bar { grid-column: 2 / 4; padding-right: 26px; background: linear-gradient(#d4d4d4, #e6e6e6 12px); display: flex; justify-content: center; }
  .view { grid-column: 1 / 3; padding-left: 34px; display: flex; justify-content: center; overflow: hidden; min-height: 0; }
`, () => `
  <button class="tab" aria-label="Tab stop">${icon('tab')}</button>
  <div class="bar"><doc-ruler></doc-ruler></div>
  <main class="view"><doc-page></doc-page></main>
  <scroll-rail></scroll-rail>
`);

define('doc-page', `
  :host { display: block; width: 1224px; height: 1584px; flex: none; padding: 7px 143px 0; background: #fff; border: solid #c6c6c6; border-width: 0 1px; font: 20px/29px var(--doc-font); font-variant-ligatures: none; color: #000; }
  h2 { margin: 0; font-size: 20px; font-weight: 700; line-height: 29px; }
  .name { display: flex; align-items: center; gap: 3px; height: 40px; margin-bottom: 56px; }
  .name i { width: 132px; height: 40px; border: 5px solid #ed1c24; background: #fff; }
  p { margin: 16px 0; text-align: justify; text-align-last: justify; }
  p span { display: block; }
  p span:last-child { text-align-last: left; }
  sup { font-size: 13px; line-height: 0; }
  .move { height: 24px; margin: -7px 0 0 -71px; }
  table { width: 1032px; margin-left: -48px; border-collapse: collapse; table-layout: fixed; font-size: 18px; line-height: 25px; }
  th, td { border: 1px solid #000; padding: 0 8px 0 11px; text-align: left; vertical-align: top; }
  th { line-height: 24px; }
  td { padding-top: 1px; height: 320px; }
  ul, ol { margin: 0; padding: 0; list-style: none; }
  ul { padding-left: 36px; }
  ul > li::before { content: "●"; float: left; margin-left: -36px; font-size: 12px; }
  ol { line-height: 24px; counter-reset: n; }
  ol > li { display: grid; grid-template-columns: 37px 1fr; counter-increment: n; }
  ol > li::before { content: counter(n, lower-alpha) "."; }
  .g { text-decoration: underline dotted #6a5be2 2px; text-underline-offset: 4px; }
`, () => `
  <div class="name"><h2>Trainer Name:</h2><i></i></div>
  <h2>Background</h2>
  <p>
    <span>The Training on Personality Development was conducted for 2 days (i.e 28<sup>th</sup>-29<sup>th</sup> August 2021) funded by</span>
    <span>YPL Office. The Personality Development training was given to all the employees who are in the service</span>
    <span>below 10 Years.&nbsp; There were 12 participants (11 participants below 10 years in service and only manager</span>
    <span>who was above 10 Years in service). The two-day training content mainly focused on developing the</span>
    <span>personality of the individual, prioritization &amp; time management, effective communication, developing</span>
    <span>positive attitude, customer delight, problem solving, empathy and self-motivation. After getting the</span>
    <span>training, the employees are expected to be mindful, keep self-awareness, effective time management and</span>
    <span>be able to balance emotions and carry out task based on priority and urgency.</span>
  </p>
  <h2>Training content and lesson learned</h2>
  <div class="move">${icon('move')}</div>
  <table>
    <colgroup><col style="width:60px"><col style="width:173px"><col style="width:531px"><col></colgroup>
    <thead><tr><th>S/N</th><th>Topic</th><th>Lesson Learned</th><th>Expected Result</th></tr></thead>
    <tbody><tr>
      <td>1</td>
      <td>Personality<br>Development</td>
      <td><ul>
        <li>Definition: Characteristic pattern of thoughts, feelings,<br>emotions, <span class="g">motivation</span> and behaviors that make a person<br>unique.</li>
        <li>5 Types of personality and their traits:
          <ol><li><span><b>O</b>penness</span></li><li><span><b>C</b>onscientiousness</span></li><li><span><b>E</b>xtraversion</span></li><li><span><b>A</b>greeableness</span></li></ol>
        </li>
      </ul></td>
      <td><ul>
        <li>Become mindful</li>
        <li>Self-awareness/knowing<br>ourselves</li>
        <li>Be able to cope with any<br>situations or environment<br>and circumstances<br>around us</li>
        <li>Be able to balance stress</li>
      </ul></td>
    </tr></tbody>
  </table>
`);

define('status-bar', `
  :host { display: flex; align-items: center; height: 33px; flex: none; padding: 0 11px; background: #f3f2f1; border-top: 1px solid #c8c6c4; font-size: 15px; color: #555; }
  .left { display: flex; align-items: center; gap: 27px; flex: 1; }
  .focus { display: flex; align-items: center; gap: 5px; margin-right: 14px; }
  .view { width: 61px; height: 32px; display: grid; place-items: center; }
  .view[aria-pressed=true] { background: #d2d0ce; }
  .zoom { display: flex; align-items: center; gap: 8px; margin-left: 8px; }
  input { appearance: none; width: 148px; height: 17px; margin: 0; background: linear-gradient(#aaa, #aaa) center / 100% 2px no-repeat; }
  input::-webkit-slider-thumb { appearance: none; width: 8px; height: 17px; background: #777; }
  output { width: 58px; text-align: right; }
`, () => `
  <div class="left"><span>Page 1 of 2</span><span>546 words</span>${icon('proof')}<span>English (United States)</span></div>
  <button class="focus">${icon('focus')}Focus</button>
  <button class="view" aria-label="Read mode">${icon('read')}</button>
  <button class="view" aria-label="Print layout" aria-pressed="true">${icon('print')}</button>
  <button class="view" aria-label="Web layout">${icon('web')}</button>
  <div class="zoom">
    <button aria-label="Zoom out">${icon('minus')}</button>
    <input type="range" min="0" max="100" value="50" aria-label="Zoom">
    <button aria-label="Zoom in">${icon('plus')}</button>
  </div>
  <output>100%</output>
`);

define('task-bar', `
  :host { display: flex; height: 60px; flex: none; background: #1d2c33; color: #fff; font-size: 17px; }
  .start { width: 72px; display: grid; place-items: center; flex: none; }
  .search { display: flex; align-items: center; gap: 18px; width: 515px; padding-left: 16px; background: #f2f2f2; border: 2px solid #c3c3c3; color: #222; }
  .search input { flex: 1; min-width: 0; border: 0; padding: 0; background: none; font: inherit; font-size: 21px; }
  .search input::placeholder { color: #333; opacity: 1; }
  .apps { display: flex; margin-left: -1px; }
  .app { width: 75px; display: grid; place-items: center; flex: none; }
  .run { background: linear-gradient(#76b9ed, #76b9ed) center bottom / 61px 3px no-repeat; }
  .on { background: #4a585d; box-shadow: inset 0 -3px #76b9ed; }
  .tray { display: flex; align-items: center; margin-left: auto; }
  .tray button { display: grid; place-items: center; height: 60px; width: 36px; }
  .tray .help { width: 60px; margin-right: 31px; }
  .weather { display: flex; align-items: center; gap: 12px; margin-right: 17px; font-size: 19px; }
  .two { text-align: center; line-height: 28px; width: 54px; }
  .clock { width: 104px; }
  .tray .note { width: 72px; }
  .desk { width: 8px; height: 60px; border-left: 1px solid #777; }
`, () => `
  <button class="start" aria-label="Start">${icon('windows')}</button>
  <label class="search">${icon('search')}<input type="text" placeholder="Type here to search" aria-label="Type here to search"></label>
  <div class="apps">
    ${['cortana', 'taskview', 'edge', 'explorer', 'store', 'mail', 'anydesk', 'outlook', 'word']
      .map(n => `<button class="app${n === 'explorer' ? ' run' : n === 'word' ? ' on' : ''}" aria-label="${n}">${icon(n)}</button>`).join('')}
  </div>
  <div class="tray">
    <button class="help" aria-label="Help">${icon('help')}</button>
    <span class="weather">${icon('weather')}83°F</span>
    <button aria-label="Hidden icons">${icon('up')}</button>
    <button aria-label="Meet now">${icon('meet')}</button>
    <button aria-label="Network">${icon('wifi')}</button>
    <button aria-label="Volume">${icon('mute')}</button>
    <button aria-label="Battery">${icon('battery')}</button>
    <div class="two">ENG<br>INTL</div>
    <div class="two clock">9:50 AM<br>9/3/2021</div>
    <button class="note" aria-label="Notifications">${icon('notify')}</button>
    <i class="desk"></i>
  </div>
`);
</script>
</body>
</html>
